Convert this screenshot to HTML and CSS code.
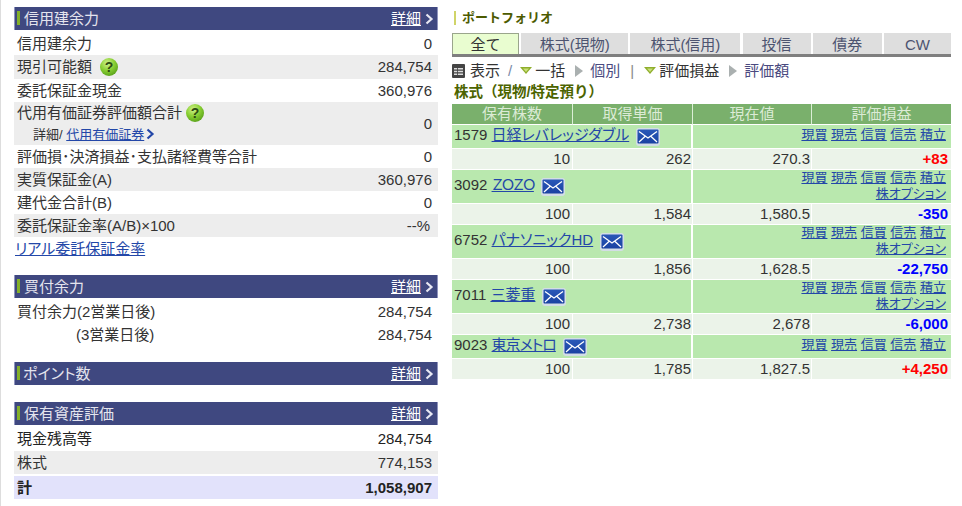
FILE: index.html
```html
<!DOCTYPE html>
<html lang="ja">
<head>
    <meta charset="UTF-8">
    <meta name="viewport" content="width=device-width, initial-scale=1.0">
    <title>口座管理</title>
    <link rel="stylesheet" href="styles.css">
</head>
<body>
    <svg class="defs" width="0" height="0">
        <defs>
            <radialGradient id="help-bg" cx="40%" cy="30%" r="70%">
                <stop offset="0" stop-color="#d2f28c"/>
                <stop offset="0.55" stop-color="#8ad034"/>
                <stop offset="1" stop-color="#5da51c"/>
            </radialGradient>
            <linearGradient id="mail-bg" x1="0" y1="0" x2="0" y2="1">
                <stop offset="0" stop-color="#2a58b8"/>
                <stop offset="1" stop-color="#1a42a2"/>
            </linearGradient>
            <symbol id="help" viewBox="0 0 18 18">
                <circle cx="9" cy="9" r="9" fill="url(#help-bg)"/>
                <text x="9" y="14" text-anchor="middle" class="help-mark">?</text>
            </symbol>
            <symbol id="mail" viewBox="0 0 24 18">
                <rect width="24" height="18" rx="3" fill="#d3dde6"/>
                <rect x="1.5" y="1.5" width="21" height="14" rx="1" fill="url(#mail-bg)"/>
                <path d="M3 3.5l9 6.5 9-6.5M3 14l6.5-6M21 14l-6.5-6" fill="none" stroke="#fff" stroke-width="1.3"/>
            </symbol>
            <symbol id="chev" viewBox="0 0 9 12">
                <path d="M1.5 1.5L6.5 6l-5 4.5" fill="none" stroke="currentColor" stroke-width="2.2"/>
            </symbol>
            <symbol id="down" viewBox="0 0 12 8">
                <path d="M0 0h12L6 7z" fill="#8fae2c"/>
                <path d="M3 1.5h6L6 5z" fill="#c9e07a"/>
            </symbol>
            <symbol id="right" viewBox="0 0 8 12">
                <path d="M0 0l8 6-8 6z" fill="#aab0b0"/>
            </symbol>
            <symbol id="grid" viewBox="0 0 13 14">
                <rect width="13" height="14" rx="1" fill="#444"/>
                <path d="M2 4h9v1.6H2zM2 6.7h9v1.6H2zM2 9.4h9V11H2z" fill="#ddd"/>
                <path d="M5 4h.8v7H5z" fill="#444"/>
            </symbol>
        </defs>
    </svg>

    <div class="page">
        <div class="left">
            <section class="box box-margin">
                <div class="box-head">
                    <span class="box-title">信用建余力</span>
                    <a class="more" href="#">詳細</a>
                    <svg class="chev"><use href="#chev"/></svg>
                </div>
                <div class="row row-first"><span>信用建余力</span><span>0</span></div>
                <div class="row alt row-icon"><span>現引可能額<svg class="help"><use href="#help"/></svg></span><span>284,754</span></div>
                <div class="row"><span>委託保証金現金</span><span>360,976</span></div>
                <div class="row alt row-double">
                    <div>
                        <div>代用有価証券評価額合計<svg class="help help-near"><use href="#help"/></svg></div>
                        <div class="sub">詳細/ <a href="#">代用有価証券</a><svg class="chev chev-blue"><use href="#chev"/></svg></div>
                    </div>
                    <span>0</span>
                </div>
                <div class="row"><span>評価損･決済損益･支払諸経費等合計</span><span>0</span></div>
                <div class="row alt"><span>実質保証金(A)</span><span>360,976</span></div>
                <div class="row"><span>建代金合計(B)</span><span>0</span></div>
                <div class="row alt"><span>委託保証金率(A/B)×100</span><span class="pct">--%</span></div>
                <a class="real-link" href="#">リアル委託保証金率</a>
            </section>

            <section class="box box-buy">
                <div class="box-head">
                    <span class="box-title">買付余力</span>
                    <a class="more" href="#">詳細</a>
                    <svg class="chev"><use href="#chev"/></svg>
                </div>
                <div class="row row-first"><span>買付余力(2営業日後)</span><span>284,754</span></div>
                <div class="row"><span class="indent">(3営業日後)</span><span>284,754</span></div>
            </section>

            <section class="box box-point">
                <div class="box-head">
                    <span class="box-title box-title-tight">ポイント数</span>
                    <a class="more" href="#">詳細</a>
                    <svg class="chev"><use href="#chev"/></svg>
                </div>
            </section>

            <section class="box">
                <div class="box-head">
                    <span class="box-title">保有資産評価</span>
                    <a class="more" href="#">詳細</a>
                    <svg class="chev"><use href="#chev"/></svg>
                </div>
                <div class="row row-first row-asset"><span>現金残高等</span><span>284,754</span></div>
                <div class="row alt"><span>株式</span><span>774,153</span></div>
                <div class="row total"><span>計</span><span>1,058,907</span></div>
            </section>
        </div>

        <div class="right">
            <h2 class="pf-title">ポートフォリオ</h2>
            <div class="tabs">
                <a class="tab tab-on tab-all" href="#">全て</a>
                <a class="tab tab-spot" href="#">株式(現物)</a>
                <a class="tab tab-credit" href="#">株式(信用)</a>
                <a class="tab tab-fund" href="#">投信</a>
                <a class="tab tab-bond" href="#">債券</a>
                <a class="tab tab-cw" href="#">CW</a>
            </div>
            <div class="tools">
                <svg class="ico-grid"><use href="#grid"/></svg>
                <span class="t-show">表示</span>
                <span class="t-slash">/</span>
                <svg class="ico-down"><use href="#down"/></svg>
                <span class="t-on">一括</span>
                <svg class="ico-right"><use href="#right"/></svg>
                <a class="t-off" href="#">個別</a>
                <span class="t-bar">|</span>
                <svg class="ico-down"><use href="#down"/></svg>
                <span class="t-on">評価損益</span>
                <svg class="ico-right"><use href="#right"/></svg>
                <a class="t-off" href="#">評価額</a>
            </div>
            <h3 class="stock-head">株式（現物/特定預り）</h3>
            <table class="pf">
                <colgroup>
                    <col class="c1"><col class="c2"><col class="c3"><col class="c4">
                </colgroup>
                <thead>
                    <tr><th>保有株数</th><th>取得単価</th><th>現在値</th><th>評価損益</th></tr>
                </thead>
                <tbody>
                    <tr class="name name-one">
                        <td colspan="2">1579 <a href="#">日経レバレッジダブル</a><svg class="mail"><use href="#mail"/></svg></td>
                        <td colspan="2" class="links"><a href="#">現買</a> <a href="#">現売</a> <a href="#">信買</a> <a href="#">信売</a> <a href="#">積立</a></td>
                    </tr>
                    <tr class="data"><td>10</td><td>262</td><td>270.3</td><td class="plus">+83</td></tr>

                    <tr class="name">
                        <td colspan="2">3092 <a class="zozo" href="#">ＺＯＺＯ</a><svg class="mail"><use href="#mail"/></svg></td>
                        <td colspan="2" class="links"><a href="#">現買</a> <a href="#">現売</a> <a href="#">信買</a> <a href="#">信売</a> <a href="#">積立</a><br><a href="#">株オプション</a></td>
                    </tr>
                    <tr class="data"><td>100</td><td>1,584</td><td>1,580.5</td><td class="minus">-350</td></tr>

                    <tr class="name">
                        <td colspan="2">6752 <a href="#">パナソニックHD</a><svg class="mail"><use href="#mail"/></svg></td>
                        <td colspan="2" class="links"><a href="#">現買</a> <a href="#">現売</a> <a href="#">信買</a> <a href="#">信売</a> <a href="#">積立</a><br><a href="#">株オプション</a></td>
                    </tr>
                    <tr class="data"><td>100</td><td>1,856</td><td>1,628.5</td><td class="minus">-22,750</td></tr>

                    <tr class="name">
                        <td colspan="2">7011 <a href="#">三菱重</a><svg class="mail"><use href="#mail"/></svg></td>
                        <td colspan="2" class="links"><a href="#">現買</a> <a href="#">現売</a> <a href="#">信買</a> <a href="#">信売</a> <a href="#">積立</a><br><a href="#">株オプション</a></td>
                    </tr>
                    <tr class="data"><td>100</td><td>2,738</td><td>2,678</td><td class="minus">-6,000</td></tr>

                    <tr class="name name-one">
                        <td colspan="2">9023 <a class="tight" href="#">東京メトロ</a><svg class="mail"><use href="#mail"/></svg></td>
                        <td colspan="2" class="links"><a href="#">現買</a> <a href="#">現売</a> <a href="#">信買</a> <a href="#">信売</a> <a href="#">積立</a></td>
                    </tr>
                    <tr class="data"><td>100</td><td>1,785</td><td>1,827.5</td><td class="plus">+4,250</td></tr>
                </tbody>
            </table>
        </div>
    </div>
</body>
</html>
```

FILE: styles.css
```css
html, body {
    height: 100%;
}
body {
    margin: 0;
    background: #fff;
    color: #333;
    font-family: "Liberation Sans", "Noto Sans CJK JP", sans-serif;
    font-size: 15px;
    line-height: 20px;
    overflow: hidden;
}
.defs {
    position: absolute;
}
.help-mark {
    font: bold 14px "Liberation Sans", sans-serif;
    fill: #2d4a12;
}
a {
    color: #2347a8;
}
.page {
    display: flex;
    gap: 14px;
    box-sizing: border-box;
    height: 100%;
    padding: 7px 0 0 14px;
    border-left: 1px solid #ddd;
}
.left {
    width: 424px;
    margin-left: -1px;
}
.right {
    width: 499px;
}

/* left boxes */
.box-head {
    display: flex;
    align-items: center;
    box-sizing: border-box;
    height: 23px;
    padding: 0 3px 0 2px;
    background: #3f4880;
    border-left: 1px solid #8f94bd;
    border-right: 1px solid #8f94bd;
    color: #e4e4ee;
}
.box-title {
    flex: 1;
    padding-left: 7px;
    position: relative;
    font-feature-settings: "palt";
}
.box-title::before {
    content: "";
    position: absolute;
    left: 0;
    top: 2px;
    width: 3px;
    height: 14px;
    background: #84b02a;
}
.box-title-tight {
    padding-left: 6px;
}
.more {
    color: #fff;
}
.chev {
    width: 9px;
    height: 12px;
    margin-left: 4px;
    color: #e8e8f2;
}
.chev-blue {
    color: #2347a8;
    margin-left: 2px;
    vertical-align: -1px;
}
.row {
    display: flex;
    justify-content: space-between;
    align-items: center;
    box-sizing: border-box;
    height: 23px;
    padding: 0 6px 0 3px;
}
.row-first {
    height: 25px;
    padding-top: 2px;
}
.row-icon {
    height: 24px;
}
.row-asset {
    height: 26px;
    color: #222;
}
.row-double {
    height: 43px;
}
.alt {
    background: #ededed;
}
.total {
    margin-top: 2px;
    background: #e2e2fb;
    font-weight: bold;
    color: #222;
}
.pct {
    padding-right: 2px;
}
.help {
    width: 18px;
    height: 18px;
    margin-left: 8px;
    vertical-align: -4px;
}
.help-near {
    margin-left: 4px;
}
.sub {
    margin-top: 2px;
    padding-left: 16px;
    font-size: 13px;
    font-feature-settings: "palt";
}
.real-link {
    display: block;
    height: 38px;
    padding: 1px 0 0 1px;
    box-sizing: border-box;
    font-feature-settings: "palt";
    line-height: 21px;
}
.indent {
    padding-left: 59px;
}
.box-buy {
    margin-bottom: 16px;
}
.box-point {
    margin-bottom: 17px;
}

/* portfolio */
.pf-title {
    margin: 0 0 6px;
    height: 20px;
    padding: 0 0 0 10px;
    position: relative;
    font-size: 13px;
    line-height: 21px;
    color: #4c5a00;
}
.pf-title::before {
    content: "";
    position: absolute;
    left: 2px;
    top: 4px;
    width: 2px;
    height: 14px;
    background: #d0d468;
}
.tabs {
    display: flex;
    justify-content: space-between;
    height: 21px;
    border-bottom: 3px solid #7f7f7f;
}
.tab {
    box-sizing: border-box;
    padding-top: 2px;
    background: #dedede;
    color: #4d5470;
    text-align: center;
    text-decoration: none;
}
.tab-on {
    background: #e9fdd0;
    border: 1px solid #9aa58c;
    border-bottom: 0;
    color: #333;
    padding-top: 1px;
}
.tab-all { width: 67px; }
.tab-spot { width: 107px; }
.tab-credit { width: 110px; }
.tab-fund { width: 68px; }
.tab-bond { width: 69px; }
.tab-cw { width: 67px; }
.tools {
    display: flex;
    align-items: center;
    height: 28px;
    margin-bottom: -4px;
}
.ico-grid {
    width: 13px;
    height: 14px;
    margin-right: 5px;
}
.ico-down {
    width: 12px;
    height: 8px;
    margin-right: 3px;
}
.ico-right {
    width: 8px;
    height: 12px;
    margin: 0 7px 0 10px;
}
.t-show,
.t-on {
    color: #333;
}
.t-slash {
    margin: 0 8px;
    color: #7a8aa8;
}
.t-off {
    color: #4a4a80;
    text-decoration: none;
}
.t-bar {
    margin: 0 10px;
    color: #888;
}
.stock-head {
    margin: 0 0 3px;
    height: 20px;
    padding-left: 2px;
    font-size: 14.5px;
    line-height: 22px;
    color: #4c6400;
}
.pf {
    width: 499px;
    table-layout: fixed;
    border-collapse: separate;
    border-spacing: 0;
}
.c1 { width: 121px; }
.c2 { width: 120px; }
.c3 { width: 119px; }
.c4 { width: 139px; }
.pf th {
    height: 20px;
    padding: 0;
    background: #7ab06c;
    border-right: 1px solid #dbeed6;
    border-bottom: 1px solid #fff;
    color: #dcebd6;
    font-weight: normal;
    line-height: 20px;
}
.pf th:last-child {
    border-right: 0;
}
.pf td {
    padding: 0 0 0 2px;
    border-right: 1px solid #fff;
    border-bottom: 1px solid #fff;
}
.pf td:last-child {
    border-right: 0;
}
.name td {
    background: #b9e8ae;
    vertical-align: top;
    color: #333;
    line-height: 18px;
}
.pf .name td:first-child {
    padding-bottom: 4px;
    border-right-width: 2px;
    vertical-align: middle;
}
.name td a {
    font-feature-settings: "palt";
}
.name td .tight {
    letter-spacing: -1px;
}
.name td .zozo {
    letter-spacing: -2px;
}
.mail {
    width: 24px;
    height: 18px;
    margin: -4px 0 -4px 7px;
    vertical-align: -2px;
}
.pf .links {
    height: 33px;
    padding: 0 5px 0 0;
    text-align: right;
    font-size: 13px;
    line-height: 15.5px;
}
.pf .name-one .links {
    height: 21px;
    padding-top: 2px;
}
.data td {
    height: 20px;
    padding: 0 1px 0 0;
    background: #ebf3e9;
    text-align: right;
    line-height: 20px;
}
.data td:first-child {
    padding-right: 2px;
}
.data td:last-child {
    padding-right: 3px;
}
.plus {
    color: #f00;
    font-weight: bold;
}
.minus {
    color: #00f;
    font-weight: bold;
}
```
